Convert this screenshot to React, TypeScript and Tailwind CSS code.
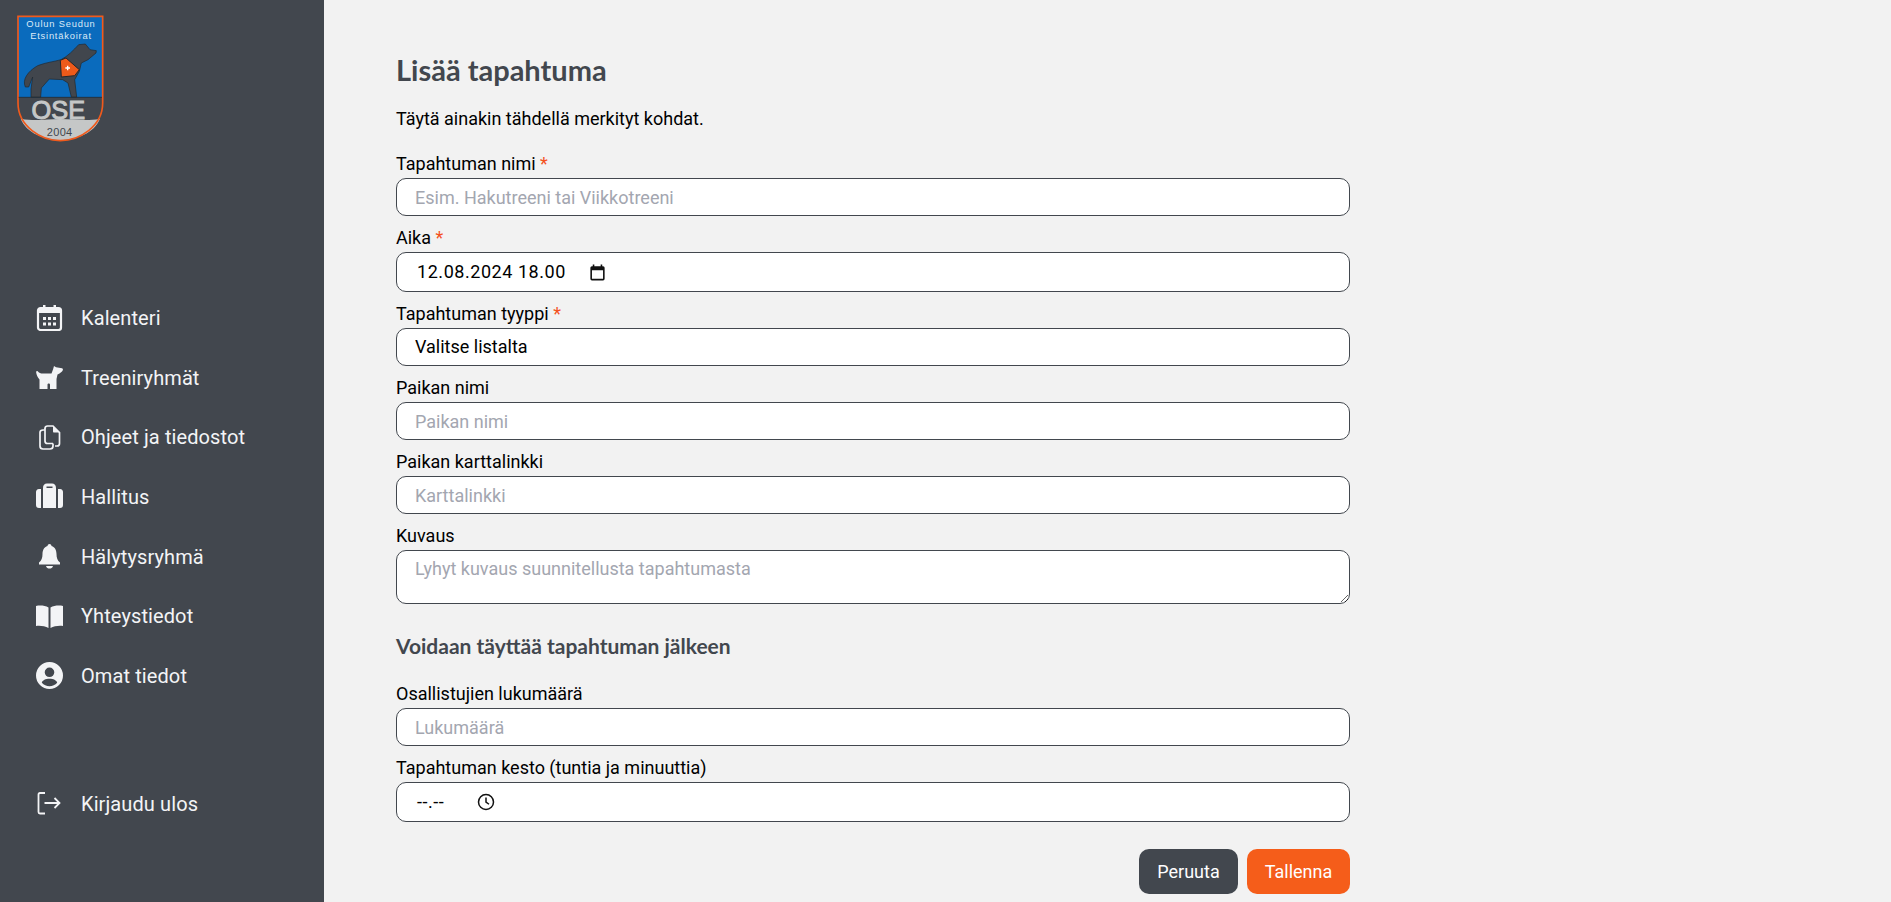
import type { ReactNode } from 'react'

function Logo() {
  const shield = 'M56 50 H310 V310 C310 380 240 423 183 423 C126 423 56 380 56 310 Z'
  return (
    <svg viewBox="53 46 261 381" className="w-[87px] h-[127px]" style={{ fontFamily: '"Liberation Sans", sans-serif' }}>
      <path d={shield} fill="#42474e" />
      <path d="M56 50 H310 V293 H56 Z" fill="#0a6bbd" />
      <path d="M64 357 C110 366 140 358 183 358 C225 358 260 366 302 357 C285 400 230 421 183 421 C136 421 81 400 64 357 Z" fill="#c5c7c7" />
      <path d={shield} fill="none" stroke="#f05a1c" strokeWidth="5" />
      <line x1="58" y1="293" x2="308" y2="293" stroke="#1e2228" strokeWidth="2" />
      <text x="185" y="83" textAnchor="middle" fontSize="28" fill="#dbe9f6" letterSpacing="2.4">Oulun Seudun</text>
      <text x="185" y="117" textAnchor="middle" fontSize="28" fill="#dbe9f6" letterSpacing="2.4">Etsintäkoirat</text>
      <path
        d="M78 262 C68 240 85 215 115 198 C140 188 165 186 185 180 C205 170 222 152 238 135 L258 133 L272 150 L291 153 L290 160 L266 180 L246 190 L240 215 L226 240 L232 292 L216 292 L206 250 L190 240 L150 238 L126 265 L124 292 L95 292 L95 268 L100 232 L88 262 Z"
        fill="#41464d"
        stroke="#23272c"
        strokeWidth="2"
      />
      <path d="M183 182 L200 175 L240 210 L226 228 L186 232 Z" fill="#ee5a1a" stroke="#23272c" strokeWidth="3" />
      <path d="M205 198 V212 M198 205 H212" stroke="#fff" strokeWidth="4" />
      <text x="177" y="357" textAnchor="middle" fontSize="76" fill="#c5c7c7" stroke="#c5c7c7" strokeWidth="3">OSE</text>
      <text x="181" y="408" textAnchor="middle" fontSize="33" fill="#42474e" letterSpacing="1">2004</text>
    </svg>
  )
}

// sidebar icons, all drawn in a 27x27 box
const icons: Record<string, ReactNode> = {
  calendar: (
    <>
      <rect x="2" y="4" width="23" height="22" rx="2.5" fill="none" stroke="#f3f4f6" strokeWidth="2.2" />
      <path d="M2 5 H25 V9 H2 Z" fill="#f3f4f6" />
      <path d="M7 1 H9.5 V5 H7 Z M17.5 1 H20 V5 H17.5 Z" fill="#f3f4f6" />
      <path d="M7 13 h3 v3 h-3 Z M12 13 h3 v3 h-3 Z M17 13 h3 v3 h-3 Z M7 18.5 h3 v3 h-3 Z M12 18.5 h3 v3 h-3 Z M17 18.5 h3 v3 h-3 Z" fill="#f3f4f6" />
    </>
  ),
  dog: (
    <path
      d="M0 7.5 L1.5 7 C3 9 4.5 9.5 7 9.5 H15.5 L17 5.5 L18 2 L20 3.2 L26 4.2 C27.5 4.7 27 6.5 26 7.5 L23.5 9.5 L21.5 10.5 C21 13 20.5 14.5 20.5 16 V25 H14 V20.5 C14 19 11.5 19 11.5 20.5 V25 H3.5 V15.5 C1.5 13 0.5 11 0 7.5 Z"
      fill="#f3f4f6"
    />
  ),
  files: (
    <>
      <path d="M9 4.5 C9 3 10 2 11.5 2 H17 L23.5 8.5 V19.5 C23.5 21 22.5 22 21 22 H19" fill="none" stroke="#f3f4f6" strokeWidth="1.7" />
      <path d="M17 2 L23.5 8.5 H18 C17.4 8.5 17 8 17 7.5 Z" fill="#f3f4f6" />
      <path d="M9 6 H7 C5 6 4 7 4 8.5 V22 C4 24 5 25 7 25 H14 C16 25 17 24 17 22 V19.5" fill="none" stroke="#f3f4f6" strokeWidth="1.7" />
      <path d="M9 4 V17 C9 18.5 10 19.5 11.5 19.5 H17" fill="none" stroke="#f3f4f6" strokeWidth="1.7" />
    </>
  ),
  case: (
    <>
      <path d="M5 6 H3 C1 6 0 7.5 0 9 V22 C0 24 1 25 3 25 H5 Z M22 6 H24 C26 6 27 7.5 27 9 V22 C27 24 26 25 24 25 H22 Z" fill="#f3f4f6" />
      <path fillRule="evenodd" d="M7 25 V5 C7 2 8.5 0.5 11 0.5 H16 C18.5 0.5 20 2 20 5 V25 Z M10.5 3.5 V5 H16.5 V3.5 Z" fill="#f3f4f6" />
    </>
  ),
  bell: (
    <path
      d="M13.5 1 C14.5 1 15.5 1.8 15.5 3 C19 4 20.5 7.5 20.5 11 C20.5 15 21.5 17.5 24 19.5 V21.5 H3 V19.5 C5.5 17.5 6.5 15 6.5 11 C6.5 7.5 8 4 11.5 3 C11.5 1.8 12.5 1 13.5 1 Z M10 23 H17 C16.5 25 15 25.5 13.5 25.5 C12 25.5 10.5 25 10 23 Z"
      fill="#f3f4f6"
    />
  ),
  book: (
    <path
      d="M0 3 C4 2 9 2.5 12.5 4.5 V25 C9 23 4 22.5 0 23 Z M27 3 C23 2 18 2.5 14.5 4.5 V25 C18 23 23 22.5 27 23 Z"
      fill="#f3f4f6"
    />
  ),
  user: (
    <path
      fillRule="evenodd"
      d="M13.5 0 A13.5 13.5 0 1 1 13.5 27 A13.5 13.5 0 1 1 13.5 0 Z M13.5 5.5 A4.8 4.8 0 1 0 13.5 15.1 A4.8 4.8 0 1 0 13.5 5.5 Z M13.5 16.8 C9.5 16.8 6.5 18.3 5.8 20.8 C7.8 23 10.5 24.3 13.5 24.3 C16.5 24.3 19.2 23 21.2 20.8 C20.5 18.3 17.5 16.8 13.5 16.8 Z"
      fill="#f3f4f6"
    />
  ),
  logout: (
    <path
      d="M9 3 H4 C3 3 2.5 3.5 2.5 4.5 V22 C2.5 23 3 23.5 4 23.5 H9 M8.5 13 H23.5 M18.5 8 L23.5 13 L18.5 18"
      fill="none"
      stroke="#f3f4f6"
      strokeWidth="1.8"
    />
  ),
}

function NavItem({ icon, label }: { icon: string; label: string }) {
  return (
    <a className="flex items-center h-[59.7px] pl-9 text-[20px] leading-none tracking-[0.1px] text-[#f3f4f6]">
      <svg viewBox="0 0 27 27" className="w-[27px] h-[27px] shrink-0">
        {icons[icon]}
      </svg>
      <span className="ml-[18px]">{label}</span>
    </a>
  )
}

function Label({ text, required }: { text: string; required?: boolean }) {
  return (
    <label className="block pt-[10px] pb-[2px] text-lg leading-6 font-[450] text-black">
      {text}
      {required && <span className="text-[#f4511e] font-normal"> *</span>}
    </label>
  )
}

const fieldClass =
  'block w-full h-[38px] rounded-[10px] border border-[#42474e] bg-white px-[18px] text-lg text-black placeholder:text-[#a3a6b0] outline-none'

function TextField({ label, placeholder, required }: { label: string; placeholder: string; required?: boolean }) {
  return (
    <div>
      <Label text={label} required={required} />
      <input type="text" placeholder={placeholder} className={fieldClass} />
    </div>
  )
}

export default function App() {
  return (
    <div className="flex h-[902px] overflow-hidden bg-[#f2f2f2]" style={{ fontFamily: 'Roboto, sans-serif' }}>
      {/* サイドバー */}
      <aside className="w-[324px] shrink-0 bg-[#42474e] flex flex-col">
        <div className="pt-[15px] pl-[17px]">
          <Logo />
        </div>
        <nav className="mt-[146px]">
          <NavItem icon="calendar" label="Kalenteri" />
          <NavItem icon="dog" label="Treeniryhmät" />
          <NavItem icon="files" label="Ohjeet ja tiedostot" />
          <NavItem icon="case" label="Hallitus" />
          <NavItem icon="bell" label="Hälytysryhmä" />
          <NavItem icon="book" label="Yhteystiedot" />
          <NavItem icon="user" label="Omat tiedot" />
        </nav>
        <div className="mt-[68px]">
          <NavItem icon="logout" label="Kirjaudu ulos" />
        </div>
      </aside>

      {/* フォーム */}
      <main className="flex-1 pl-[72px] pt-[52px]">
        <div className="w-[954px]">
          <h1 className="text-[29px] leading-9 font-bold text-[#42474e]" style={{ fontFamily: 'Lato, sans-serif' }}>
            Lisää tapahtuma
          </h1>
          <p className="mt-[19px] mb-[11px] text-lg leading-6 text-black">Täytä ainakin tähdellä merkityt kohdat.</p>

          <TextField label="Tapahtuman nimi" placeholder="Esim. Hakutreeni tai Viikkotreeni" required />

          <div>
            <Label text="Aika" required />
            <div className="flex items-center h-[40px] rounded-[10px] border border-[#42474e] bg-white pl-5 text-lg text-black">
              <span className="tracking-[0.55px]">12.08.2024 18.00</span>
              <svg viewBox="0 0 24 24" className="ml-[22px] w-[19px] h-[19px]">
                <path
                  d="M19 4h-1V2h-2v2H8V2H6v2H5a2 2 0 0 0-2 2v14a2 2 0 0 0 2 2h14a2 2 0 0 0 2-2V6a2 2 0 0 0-2-2zm0 16H5V9h14v11z"
                  fill="#111"
                />
              </svg>
            </div>
          </div>

          <div>
            <Label text="Tapahtuman tyyppi" required />
            <select className={`${fieldClass} appearance-none`}>
              <option>Valitse listalta</option>
            </select>
          </div>

          <TextField label="Paikan nimi" placeholder="Paikan nimi" />
          <TextField label="Paikan karttalinkki" placeholder="Karttalinkki" />

          <div>
            <Label text="Kuvaus" />
            <textarea
              placeholder="Lyhyt kuvaus suunnitellusta tapahtumasta"
              className="block w-full h-[54px] rounded-[10px] border border-[#42474e] bg-white px-[18px] py-1 text-lg text-black placeholder:text-[#a3a6b0] outline-none"
            />
          </div>

          <h2 className="mt-[30px] mb-[14px] text-[21px] leading-6 font-bold text-[#42474e]" style={{ fontFamily: 'Lato, sans-serif' }}>
            Voidaan täyttää tapahtuman jälkeen
          </h2>

          <TextField label="Osallistujien lukumäärä" placeholder="Lukumäärä" />

          <div>
            <Label text="Tapahtuman kesto (tuntia ja minuuttia)" />
            <div className="flex items-center h-[40px] rounded-[10px] border border-[#42474e] bg-white pl-5 text-lg text-black">
              <span className="tracking-[0.5px]">--.--</span>
              <svg viewBox="0 0 24 24" className="ml-[33px] w-[18px] h-[18px]" fill="none" stroke="#111" strokeWidth="2">
                <circle cx="12" cy="12" r="10" />
                <path d="M12 6v6l4 3" />
              </svg>
            </div>
          </div>

          <div className="mt-[27px] flex justify-end gap-[9px]">
            <button type="button" className="h-[45px] w-[99px] rounded-[10px] bg-[#42474e] text-lg text-white">
              Peruuta
            </button>
            <button type="button" className="h-[45px] w-[103px] rounded-[10px] bg-[#f55d1a] text-lg text-white">
              Tallenna
            </button>
          </div>
        </div>
      </main>
    </div>
  )
}
